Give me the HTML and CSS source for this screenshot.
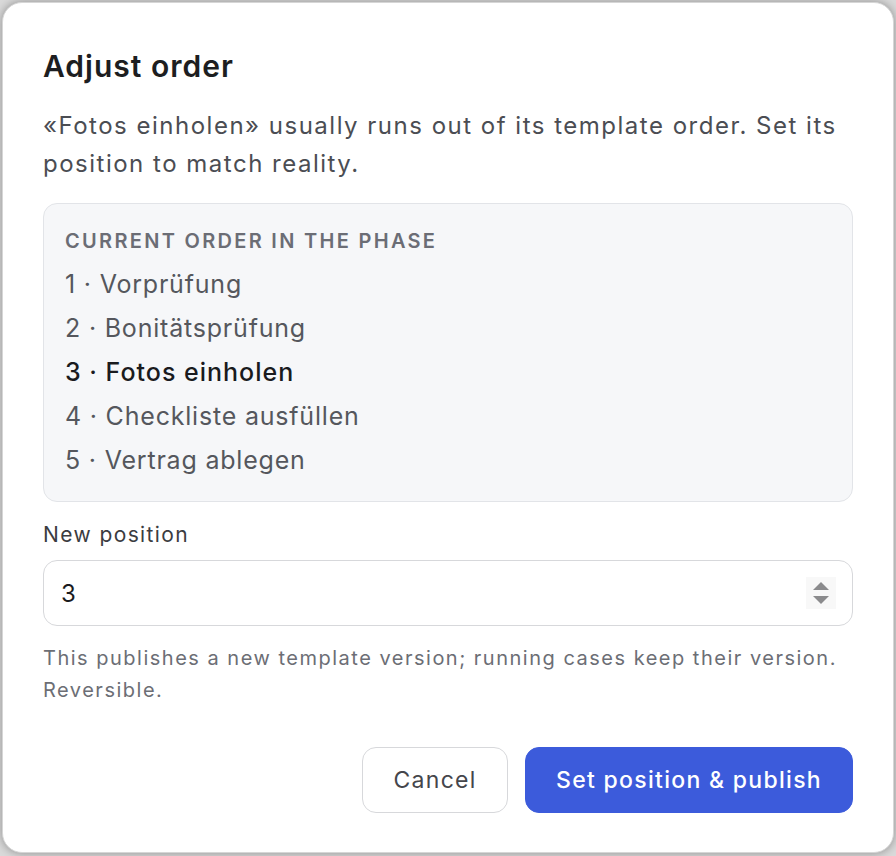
FILE: index.html
```html
<!DOCTYPE html>
<html lang="en">
<head>
    <meta charset="utf-8">
    <title>Adjust order</title>
    <link rel="stylesheet" href="styles.css">
</head>
<body>

<div class="dialog">
    <h2 class="dialogTitle">Adjust order</h2>

    <p class="dialogText">«Fotos einholen» usually runs out of its template order. Set its position to match reality.</p>

    <div class="orderBox">
        <div class="orderHeading">Current order in the phase</div>
        <ul class="orderList">
            <li>1 · Vorprüfung</li>
            <li>2 · Bonitätsprüfung</li>
            <li class="current">3 · Fotos einholen</li>
            <li>4 · Checkliste ausfüllen</li>
            <li>5 · Vertrag ablegen</li>
        </ul>
    </div>

    <label class="fieldLabel" for="newPosition">New position</label>
    <div class="fieldBox">
        <input id="newPosition" class="fieldInput" type="number" min="1" max="5" value="3">
        <span class="spinner">
            <svg width="18" height="28" viewBox="0 0 18 28">
                <path d="M9 3 L17 11 L1 11 Z" fill="#8b8b8d"/>
                <path d="M1 17 L17 17 L9 25 Z" fill="#8b8b8d"/>
            </svg>
        </span>
    </div>

    <p class="helpText">This publishes a new template version; running cases keep their version. Reversible.</p>

    <div class="dialogActions">
        <button class="btn btnCancel" type="button">Cancel</button>
        <button class="btn btnPrimary" type="button">Set position &amp; publish</button>
    </div>
</div>

</body>
</html>
```

FILE: styles.css
```css
html, body {
    margin: 0;
    height: 100%;
}

body {
    background-color: #dadada;
    font-family: Inter, "Noto Sans", sans-serif;
    padding: 2px;
    box-sizing: border-box;
}

.dialog {
    width: 892px;
    height: 851px;
    box-sizing: border-box;
    padding: 40px 40px 39px 40px;
    background-color: #fff;
    border: 1px solid #d6d6d6;
    border-radius: 20px;
    box-shadow: 0 0 10px rgba(0, 0, 0, 0.35);
    display: flex;
    flex-direction: column;
}

.dialogTitle {
    margin: 0;
    font-size: 30px;
    line-height: 46px;
    font-weight: 600;
    letter-spacing: 1px;
    color: #1d1e21;
}

.dialogText {
    margin: 18px 0 0 0;
    font-size: 24px;
    line-height: 38px;
    letter-spacing: 1.5px;
    color: #4b4d53;
}

.orderBox {
    margin-top: 20px;
    padding: 22px 21px 19px 21px;
    background-color: #f6f7f9;
    border: 1px solid #e2e4e8;
    border-radius: 14px;
}

.orderHeading {
    font-size: 20px;
    line-height: 30px;
    font-weight: 600;
    text-transform: uppercase;
    letter-spacing: 2.3px;
    color: #6b6d75;
    margin-bottom: 6px;
}

.orderList {
    list-style: none;
    margin: 0;
    padding: 0;
}

.orderList li {
    font-size: 25px;
    line-height: 44px;
    letter-spacing: 0.8px;
    color: #55575d;
}

.orderList li.current {
    color: #1a1b1e;
    font-weight: 500;
    letter-spacing: 1px;
}

.fieldLabel {
    margin-top: 18px;
    font-size: 21px;
    line-height: 30px;
    letter-spacing: 1.4px;
    color: #3b3c41;
}

.fieldBox {
    margin-top: 10px;
    height: 66px;
    box-sizing: border-box;
    border: 1px solid #d7d8db;
    border-radius: 14px;
    display: flex;
    align-items: center;
    padding: 0 16px 0 17px;
}

.fieldInput {
    flex: 1;
    border: none;
    padding: 0;
    font-family: inherit;
    font-size: 24px;
    color: #1a1b1e;
    outline: none;
    background: transparent;
    -moz-appearance: textfield;
}

.fieldInput::-webkit-inner-spin-button,
.fieldInput::-webkit-outer-spin-button {
    -webkit-appearance: none;
    margin: 0;
}

.spinner {
    display: flex;
    align-items: center;
    justify-content: center;
    width: 30px;
    height: 32px;
    background-color: #f8f8f8;
}

.helpText {
    margin: 16px 0 0 0;
    font-size: 20px;
    line-height: 32px;
    letter-spacing: 1.5px;
    color: #6c6e75;
}

.dialogActions {
    margin-top: auto;
    display: flex;
    justify-content: flex-end;
    gap: 17px;
}

.btn {
    height: 66px;
    box-sizing: border-box;
    border-radius: 14px;
    font-family: inherit;
    font-size: 23px;
    letter-spacing: 1.3px;
    cursor: pointer;
}

.btnCancel {
    width: 146px;
    background-color: #fff;
    border: 1px solid #d7d8db;
    color: #45464b;
}

.btnPrimary {
    padding: 0 30px;
    background-color: #3c5bdb;
    border: 1px solid #3c5bdb;
    color: #fff;
    font-weight: 500;
}
```
